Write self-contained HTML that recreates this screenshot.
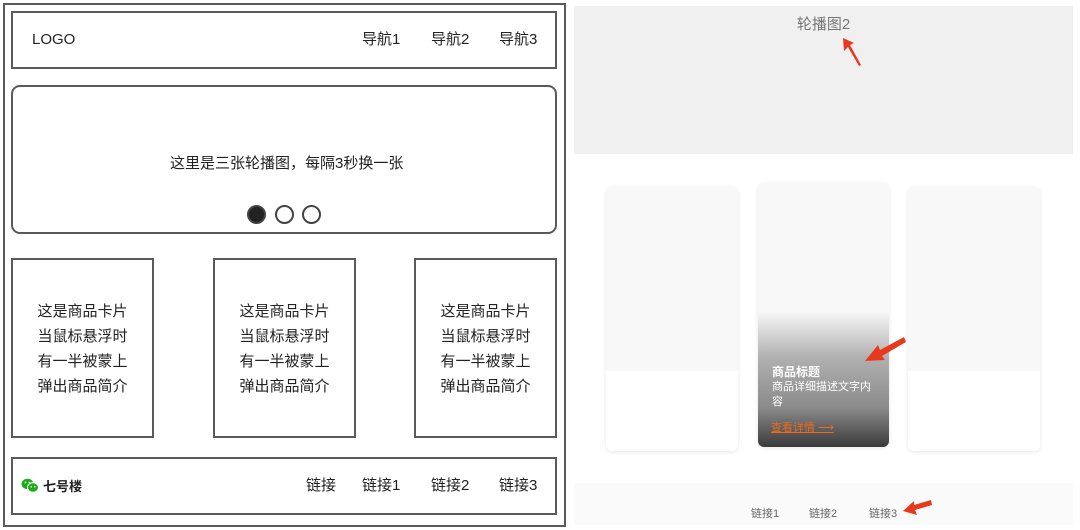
<!DOCTYPE html>
<html><head><meta charset="utf-8"><style>
*{margin:0;padding:0;box-sizing:border-box}
body{width:1080px;height:530px;background:#fff;position:relative;overflow:hidden;font-family:"Liberation Sans","Noto Sans CJK SC",sans-serif;color:#222}
.a{position:absolute}
.bx{position:absolute;border:2px solid #5a5a5a;background:#fff}
.t{position:absolute;font-size:15px;white-space:nowrap;line-height:18px}
.card .t{line-height:25px;text-align:center;width:100%;left:0;top:39px}
.dot{position:absolute;width:19px;height:19px;border-radius:50%;border:2px solid #444;top:205px}
.rc{position:absolute;border-radius:6px;background:#fff;box-shadow:0 1px 4px rgba(0,0,0,.1);overflow:hidden}
.rc .top{position:absolute;left:0;top:0;right:0;height:184px;background:#f8f8f8}
.rt{position:absolute;font-size:11px;color:#666;white-space:nowrap}
</style></head><body>
<div class="bx" style="left:3px;top:3px;width:563px;height:524px"></div>
<div class="bx" style="left:11px;top:11px;width:546px;height:58px"></div>
<div class="t" style="left:32px;top:31px">LOGO</div>
<div class="t" style="left:362px;top:31px">导航1</div>
<div class="t" style="left:431px;top:31px">导航2</div>
<div class="t" style="left:499px;top:31px">导航3</div>
<div class="bx" style="left:11px;top:85px;width:546px;height:149px;border-radius:9px"></div>
<div class="t" style="left:170px;top:155px">这里是三张轮播图，每隔3秒换一张</div>
<div class="dot" style="left:247px;background:#222"></div>
<div class="dot" style="left:275px"></div>
<div class="dot" style="left:302px"></div>
<div class="bx card" style="left:11px;top:258px;width:143px;height:180px"><div class="t">这是商品卡片<br>当鼠标悬浮时<br>有一半被蒙上<br>弹出商品简介</div></div>
<div class="bx card" style="left:213px;top:258px;width:143px;height:180px"><div class="t">这是商品卡片<br>当鼠标悬浮时<br>有一半被蒙上<br>弹出商品简介</div></div>
<div class="bx card" style="left:414px;top:258px;width:143px;height:180px"><div class="t">这是商品卡片<br>当鼠标悬浮时<br>有一半被蒙上<br>弹出商品简介</div></div>
<div class="bx" style="left:11px;top:457px;width:546px;height:58px"></div>
<svg class="a" style="left:21px;top:478px" width="18" height="15" viewBox="0 0 18 15"><ellipse cx="6.5" cy="6" rx="6" ry="5.2" fill="#1aad19"/><ellipse cx="12" cy="9.5" rx="5.5" ry="4.8" fill="#1aad19" stroke="#fff" stroke-width="1"/><circle cx="4.5" cy="4.5" r=".9" fill="#fff"/><circle cx="8.5" cy="4.5" r=".9" fill="#fff"/><circle cx="10.3" cy="8.8" r=".8" fill="#fff"/><circle cx="13.8" cy="8.8" r=".8" fill="#fff"/></svg>
<div class="t" style="left:43px;top:478px;font-size:13px;font-weight:bold">七号楼</div>
<div class="t" style="left:306px;top:477px">链接</div>
<div class="t" style="left:362px;top:477px">链接1</div>
<div class="t" style="left:431px;top:477px">链接2</div>
<div class="t" style="left:499px;top:477px">链接3</div>

<div class="a" style="left:574px;top:6px;width:499px;height:148px;background:#f0f0f0"></div>
<div class="a" style="left:574px;top:13px;width:499px;text-align:center;font-size:15px;color:#777">轮播图2</div>
<svg class="a" style="left:838px;top:36px" width="24" height="32"><path d="M21 30 L10 11 L6 15 L5 2 L16 7 L12 9 L23 29 Z" fill="#e8391d"/></svg>
<div class="rc" style="left:606px;top:187px;width:132px;height:264px"><div class="top"></div></div>
<div class="rc" style="left:758px;top:183px;width:131px;height:264px;background:linear-gradient(#f8f8f8 0,#f8f8f8 128px,#b0b0b0 175px,#8a8a8a 225px,#3a3a3a 264px)">
<div class="a" style="left:14px;top:180px;color:#fff;font-size:12px;font-weight:bold">商品标题</div>
<div class="a" style="left:14px;top:197px;width:108px;color:#fff;font-size:11px;line-height:15px">商品详细描述文字内容</div>
<div class="a" style="left:13px;top:236px;color:#f06a1b;font-size:11px;text-decoration:underline">查看详情 ⟶</div>
</div>
<svg class="a" style="left:864px;top:336px" width="42" height="28"><path d="M40 1 L16 14 L14 9 L1 25 L21 24 L18 20 L42 6 Z" fill="#e8391d"/></svg>
<div class="rc" style="left:908px;top:187px;width:132px;height:264px"><div class="top"></div></div>
<div class="a" style="left:574px;top:483px;width:499px;height:42px;background:#fafafa"></div>
<div class="rt" style="left:751px;top:505px">链接1</div>
<div class="rt" style="left:809px;top:505px">链接2</div>
<div class="rt" style="left:869px;top:505px">链接3</div>
<svg class="a" style="left:902px;top:499px" width="30" height="18"><path d="M29 1 L12 6 L12 2 L1 12 L15 16 L13 11 L30 6 Z" fill="#e8391d"/></svg>
</body></html>
